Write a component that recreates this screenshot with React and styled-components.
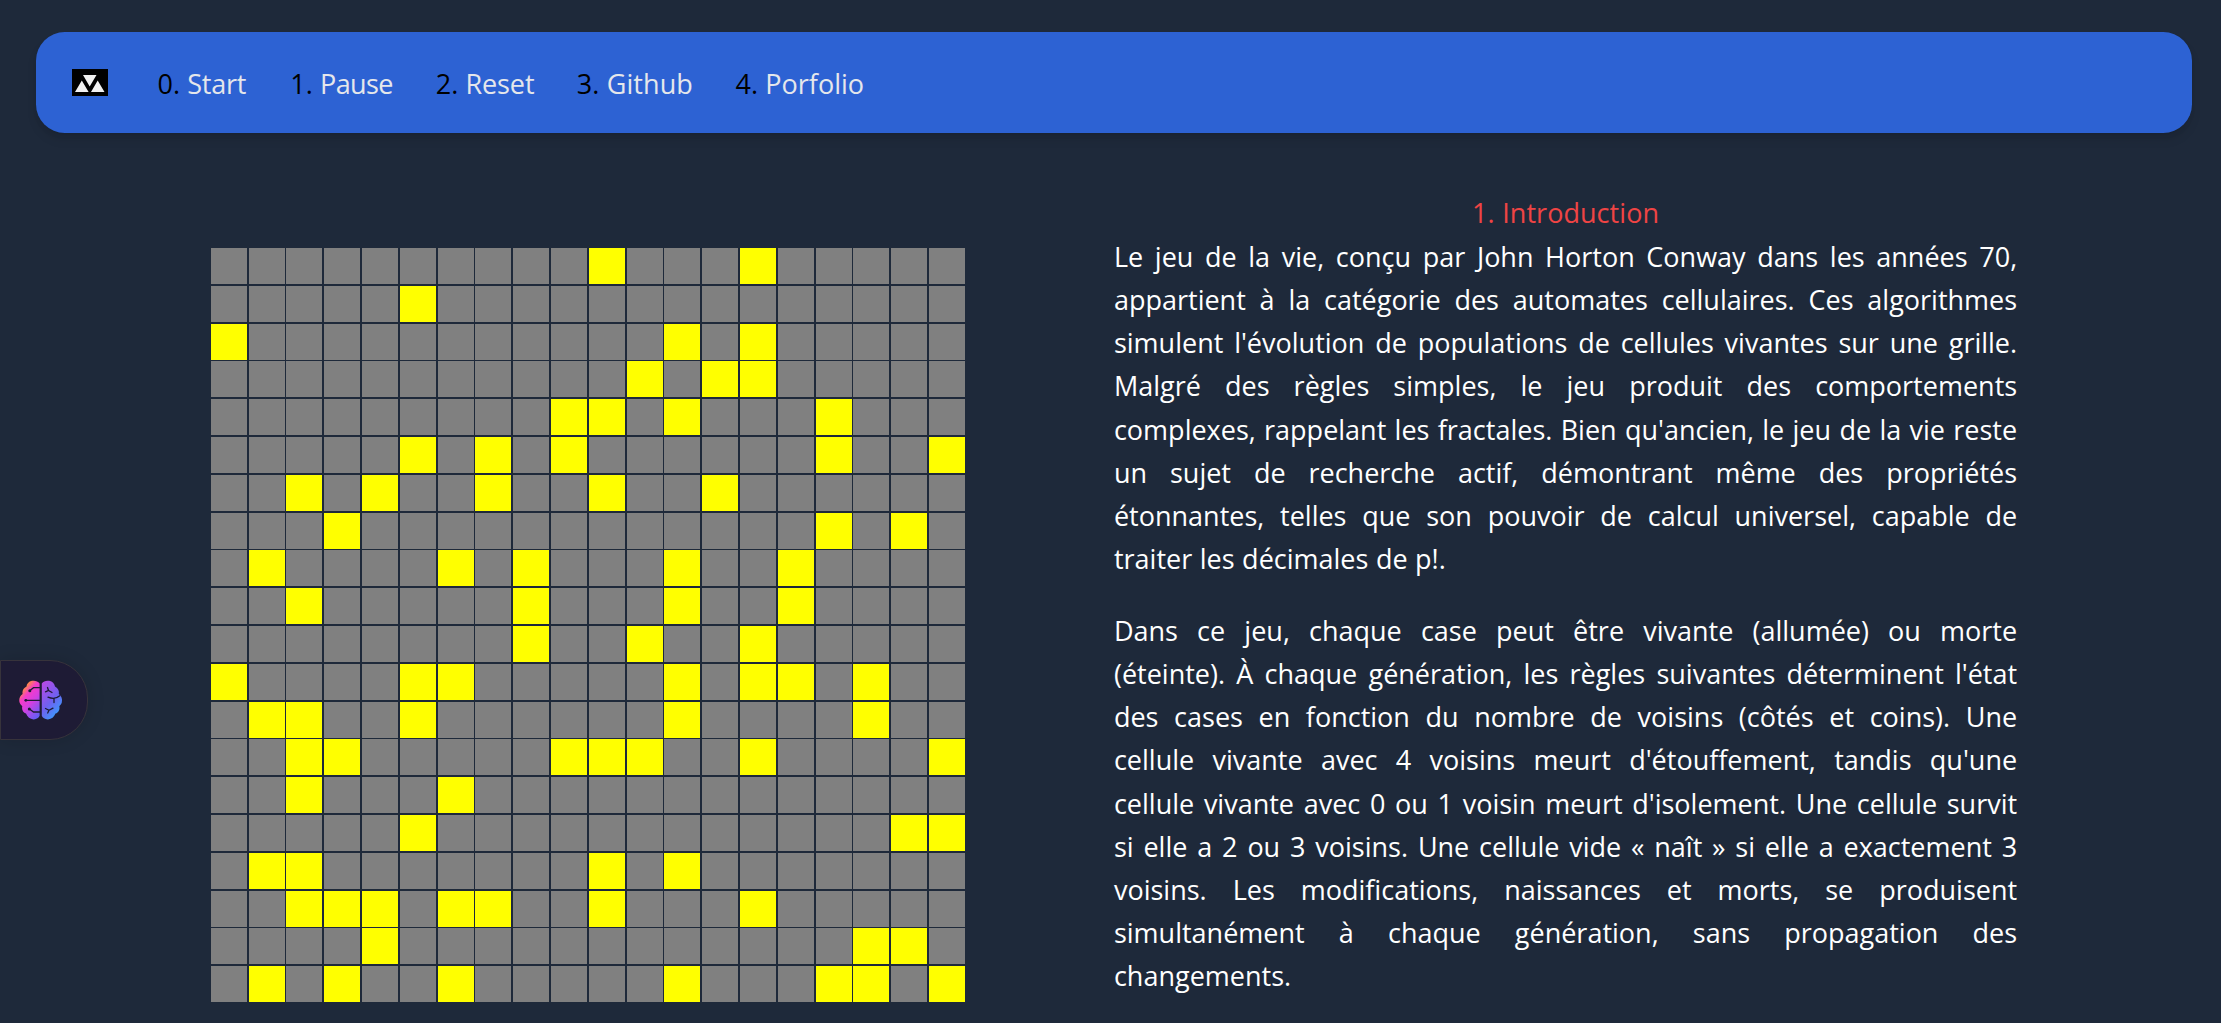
import React from "react";
import styled, { createGlobalStyle } from "styled-components";

const GlobalStyle = createGlobalStyle`
  *, *::before, *::after { box-sizing: border-box; }
  body {
    margin: 0;
    height: 1023px;
    overflow: hidden;
    background: #1e293a;
    color: #fff;
    font-family: "Open Sans", "Noto Sans", sans-serif;
    font-size: 27px;
    line-height: 43.2px;
  }
`;

const Page = styled.div`
  height: 1023px;
  overflow: hidden;
  padding: 32.4px 28.8px 0 36px;
`;

const NavBar = styled.nav`
  display: flex;
  align-items: center;
  height: 100.8px;
  padding: 0 36px;
  border-radius: 28.8px;
  background: #2d62d3;
  box-shadow: 0 7.2px 11px -1.8px rgba(0, 0, 0, 0.1), 0 3.6px 7px -3.6px rgba(0, 0, 0, 0.1);
`;

const Logo = styled.svg`
  display: block;
  width: 36px;
  height: 27px;
  flex: none;
`;

const NavList = styled.ul`
  display: flex;
  gap: 43.2px;
  margin: 1.6px 0 0 49.5px;
  padding: 0;
  list-style: none;
`;

const NavItem = styled.li`
  display: flex;
  width: ${(p) => p.$width}px;
  color: #000;
  white-space: nowrap;
`;

const NavNumber = styled.span`
  flex: none;
  width: 29.8px;
`;

const NavLink = styled.a`
  color: #e5e7eb;
  letter-spacing: ${(p) => p.$tracking || 0}px;
`;

const Main = styled.main`
  display: flex;
  align-items: flex-start;
`;

const Board = styled.div`
  display: grid;
  flex: none;
  grid-template-columns: repeat(20, 36px);
  grid-auto-rows: 36px;
  gap: 1.8px;
  margin: 114.8px 0 0 174.8px;
`;

const Cell = styled.div`
  background: ${(p) => (p.$alive ? "#ffff00" : "#808080")};
`;

const Article = styled.article`
  width: 903.2px;
  margin: 58px 0 0 149px;
  word-spacing: 0.5px;
`;

const Heading = styled.h2`
  margin: 0 0 0.4px;
  color: #ef4444;
  font-size: inherit;
  font-weight: 400;
  letter-spacing: 0.05px;
  text-align: center;
`;

const Paragraph = styled.p`
  margin: 0 0 28.4px;
`;

const Line = styled.span`
  display: block;
  white-space: nowrap;
  text-align: justify;
  text-align-last: justify;

  &:last-child {
    text-align-last: left;
  }
`;

const BrainTab = styled.button`
  position: fixed;
  left: 0;
  top: 660px;
  display: flex;
  align-items: center;
  width: 88px;
  height: 80px;
  padding: 0 0 0 18px;
  border: 1px solid #37333b;
  border-radius: 0 38px 38px 0;
  background: #1e1b35;
  box-shadow: 0 0 18px rgba(0, 0, 0, 0.14);
`;

const rows = [
  [10, 14], [5], [0, 12, 14], [11, 13, 14], [9, 10, 12, 16],
  [5, 7, 9, 16, 19], [2, 4, 7, 10, 13], [3, 16, 18], [1, 6, 8, 12, 15],
  [2, 8, 12, 15], [8, 11, 14], [0, 5, 6, 12, 14, 15, 17], [1, 2, 5, 12, 17],
  [2, 3, 9, 10, 11, 14, 19], [2, 6], [5, 18, 19], [1, 2, 10, 12],
  [2, 3, 4, 6, 7, 10, 14], [4, 17, 18], [1, 3, 6, 12, 16, 17, 19],
];

const links = [
  { label: "Start", width: 89.5, tracking: -0.25 },
  { label: "Pause", width: 102.3, tracking: -0.6 },
  { label: "Reset", width: 98, tracking: -0.1 },
  { label: "Github", width: 115.5, tracking: 0.1 },
  { label: "Porfolio", width: 129 },
];

const paragraphs = [
  [
    "Le jeu de la vie, conçu par John Horton Conway dans les années 70,",
    "appartient à la catégorie des automates cellulaires. Ces algorithmes",
    "simulent l'évolution de populations de cellules vivantes sur une grille.",
    "Malgré des règles simples, le jeu produit des comportements",
    "complexes, rappelant les fractales. Bien qu'ancien, le jeu de la vie reste",
    "un sujet de recherche actif, démontrant même des propriétés",
    "étonnantes, telles que son pouvoir de calcul universel, capable de",
    "traiter les décimales de p!.",
  ],
  [
    "Dans ce jeu, chaque case peut être vivante (allumée) ou morte",
    "(éteinte). À chaque génération, les règles suivantes déterminent l'état",
    "des cases en fonction du nombre de voisins (côtés et coins). Une",
    "cellule vivante avec 4 voisins meurt d'étouffement, tandis qu'une",
    "cellule vivante avec 0 ou 1 voisin meurt d'isolement. Une cellule survit",
    "si elle a 2 ou 3 voisins. Une cellule vide « naît » si elle a exactement 3",
    "voisins. Les modifications, naissances et morts, se produisent",
    "simultanément à chaque génération, sans propagation des",
    "changements.",
  ],
];

function BrainIcon() {
  return (
    <svg width="44" height="40" viewBox="0 0 44 40">
      <defs>
        <linearGradient id="brainLeft" x1="0.15" y1="0" x2="0.75" y2="1">
          <stop offset="0" stopColor="#ffa01e" />
          <stop offset="0.17" stopColor="#ff8a45" />
          <stop offset="0.36" stopColor="#f53cc8" />
          <stop offset="0.6" stopColor="#d63fe0" />
          <stop offset="1" stopColor="#6a5cf5" />
        </linearGradient>
        <linearGradient id="brainRight" x1="0.2" y1="0" x2="0.8" y2="1">
          <stop offset="0" stopColor="#b44be6" />
          <stop offset="0.5" stopColor="#7060f0" />
          <stop offset="1" stopColor="#2ea8ff" />
        </linearGradient>
      </defs>
      <path fill="url(#brainLeft)" d="M20.600 3.500C19 1 15.800 .3 13 .8C9.500 1.400 7.800 4 7.500 6.500C4.300 8 3 11 3.600 14C.6 16 -.3 19.500 .6 22.500C1.200 24.500 2.500 25.500 3.300 26.200C2.400 29.500 4 32.600 7 33.600C8.300 37 11 39.300 14.500 39.400C17.500 39.500 19.700 38 20.600 35.800Z" />
      <path fill="url(#brainRight)" d="M22.800 3.500C24.400 1 27.500 .3 30.200 .8C33.500 1.300 35.500 3.800 36 6.500C39.200 8 40.400 11 39.800 14C42.600 16 43.600 19 42.800 22.500C42.300 24.500 41 25.500 40.300 26.200C41.100 29.500 39.500 32.500 36.500 33.600C35.200 37 32.500 39.300 29 39.400C25.900 39.500 23.700 38 22.800 35.800Z" />
      <g fill="none" stroke="#1e1b35" strokeWidth="1.3" strokeLinecap="round">
        <path d="M21 7.700H14.500L11 10.500M21 20.300H7.500M21 32H14.500L10.500 29" />
        <path d="M26.500 11.800L29.500 10.500L33 12.500M29.500 10.500L28.500 7.500" />
        <path d="M29 17.200Q36 20 40.800 15.800M35 18.800V22.500" />
        <path d="M26.500 28.500L30 30.300L34 28.200M30 30.300L28.700 33" />
      </g>
      <g fill="#1e1b35">
        <circle cx="10.800" cy="10.800" r="1.500" />
        <circle cx="6.800" cy="20.300" r="1.400" />
        <circle cx="10.300" cy="29" r="1.500" />
      </g>
    </svg>
  );
}

export default function App() {
  return (
    <>
      <GlobalStyle />
      <Page>
        <NavBar>
          <Logo viewBox="0 0 36 27">
            <rect width="36" height="27" fill="#000" />
            <path fill="#f2f2f2" d="M11 6H24.500L17.700 17.500ZM3 23L9.800 11.500L16.600 23ZM19 23L25.700 11.500L32.500 23Z" />
          </Logo>
          <NavList>
            {links.map((link, i) => (
              <NavItem key={link.label} $width={link.width}>
                <NavNumber>{i}.</NavNumber>
                <NavLink $tracking={link.tracking}>{link.label}</NavLink>
              </NavItem>
            ))}
          </NavList>
        </NavBar>
        <Main>
          <Board>
            {rows.flatMap((alive, y) =>
              Array.from({ length: 20 }, (_, x) => (
                <Cell key={`${y}-${x}`} $alive={alive.includes(x)} />
              ))
            )}
          </Board>
          <Article>
            <Heading>1. Introduction</Heading>
            {paragraphs.map((lines) => (
              <Paragraph key={lines[0]}>
                {lines.map((line) => (
                  <Line key={line}>{line} </Line>
                ))}
              </Paragraph>
            ))}
          </Article>
        </Main>
      </Page>
      <BrainTab aria-label="Assistant">
        <BrainIcon />
      </BrainTab>
    </>
  );
}
